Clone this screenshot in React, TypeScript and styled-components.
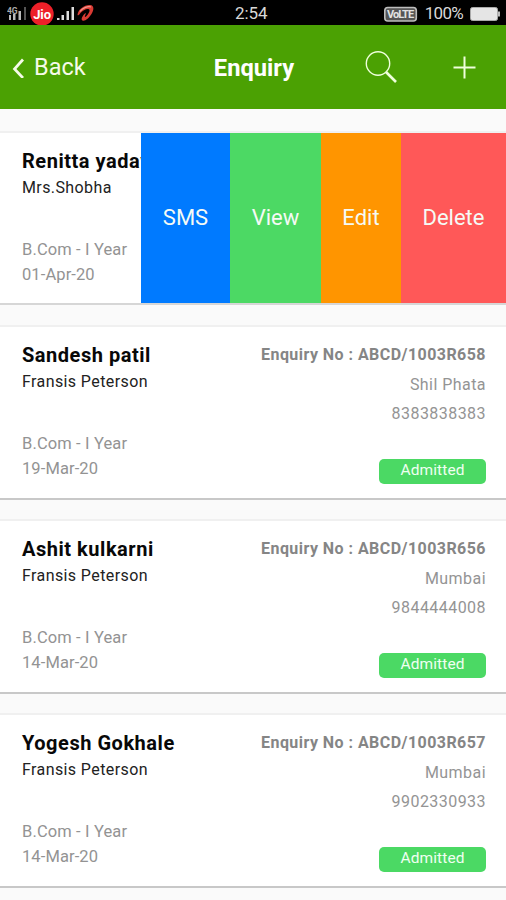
import React from "react";
import styled, { createGlobalStyle } from "styled-components";

const GlobalStyle = createGlobalStyle`
  * { box-sizing: border-box; }
  html, body { margin: 0; padding: 0; background: #fafafa; }
  body { font-family: Roboto, "Liberation Sans", sans-serif; overflow: hidden; }
`;

const Screen = styled.div`
  display: flex;
  flex-direction: column;
  width: 506px;
  height: 900px;
  overflow: hidden;
  background: #fafafa;
`;

const StatusBar = styled.div`
  display: grid;
  grid-template-columns: 228px 33px 1fr;
  align-items: center;
  height: 25px;
  flex: none;
  padding: 0 6px 0 7px;
  background: #000;
  color: #d8d8d8;
  font-size: 17px;
  line-height: 25px;
  letter-spacing: -0.1px;
`;

const StatusSide = styled.div<{ $end?: boolean }>`
  display: flex;
  align-items: center;
  justify-content: ${(p) => (p.$end ? "flex-end" : "flex-start")};
  gap: 7px;
  height: 25px;
`;

const Clock = styled.span`
  padding-top: 1px;
`;

const Percent = styled.span`
  padding-top: 1px;
  letter-spacing: -0.7px;
`;

const Header = styled.header`
  display: grid;
  grid-template-columns: 180px 148px 1fr;
  align-items: center;
  flex: none;
  height: 84px;
  background: #4ba103;
  color: #fff;
`;

const BackButton = styled.button`
  display: flex;
  align-items: center;
  gap: 9px;
  padding: 0 0 0 12px;
  border: 0;
  background: none;
  color: #f6fbe9;
  font: 400 23.5px/30px Roboto, sans-serif;
`;

const Title = styled.h1`
  margin: 0;
  padding-top: 2px;
  text-align: center;
  font-size: 23.7px;
  font-weight: 700;
  line-height: 30px;
`;

const HeaderTools = styled.div`
  display: flex;
  justify-content: space-between;
  align-items: center;
  padding: 0 30px 0 36px;
`;

const IconButton = styled.button`
  display: flex;
  padding: 0;
  border: 0;
  background: none;
`;

const List = styled.main`
  display: flex;
  flex-direction: column;
  gap: 19px;
  padding-top: 22px;
`;

const Card = styled.article<{ $swiped?: boolean }>`
  display: flex;
  flex: none;
  height: ${(p) => (p.$swiped ? "174px" : "175px")};
  margin-bottom: ${(p) => (p.$swiped ? "1px" : "0")};
  border-top: 2px solid #f0f0f0;
  border-bottom: 2px solid ${(p) => (p.$swiped ? "#d6d6d6" : "#c8c8c8")};
  background: #fff;
`;

const Person = styled.div<{ $swiped?: boolean }>`
  display: flex;
  flex-direction: column;
  width: ${(p) => (p.$swiped ? "141px" : "230px")};
  flex: none;
  overflow: hidden;
  white-space: nowrap;
  padding: 16px 0 0 22px;
`;

const Name = styled.h2`
  margin: 0;
  color: #080808;
  font-size: 20px;
  font-weight: 700;
  line-height: 24px;
  letter-spacing: 0.53px;
`;

const Guardian = styled.span`
  margin-top: 3px;
  color: #222;
  font-size: 16px;
  line-height: 24px;
  letter-spacing: 0.4px;
`;

const Course = styled.span`
  margin-top: 37px;
  color: #939393;
  font-size: 16.5px;
  line-height: 26px;
  letter-spacing: 0.13px;
`;

const EnquiryDate = styled.span`
  color: #939393;
  font-size: 16.5px;
  line-height: 24px;
  letter-spacing: 0.1px;
`;

const Details = styled.div`
  display: flex;
  flex-direction: column;
  align-items: flex-end;
  flex: 1;
  padding: 15px 20px 0 0;
  color: #949494;
  font-size: 16px;
  line-height: 29px;
  letter-spacing: 0.45px;
`;

const EnquiryNumber = styled.strong`
  color: #858585;
  font-weight: 700;
  line-height: 26px;
  margin-bottom: 2px;
`;

const Badge = styled.span`
  width: 107px;
  height: 25px;
  margin-top: 31px;
  border-radius: 5px;
  background: #4bd964;
  color: #effff0;
  text-align: center;
  font-size: 15.5px;
  line-height: 23px;
  letter-spacing: 0.1px;
`;

const Actions = styled.div`
  display: grid;
  grid-template-columns: 89px 91px 80px 1fr;
  flex: 1;
`;

const Action = styled.button<{ $color: string }>`
  padding: 0;
  border: 0;
  background: ${(p) => p.$color};
  color: #f5faf5;
  font: 400 22px/26px Roboto, sans-serif;
`;

const records = [
  { name: "Sandesh patil", date: "19-Mar-20", no: "ABCD/1003R658", city: "Shil Phata", phone: "8383838383" },
  { name: "Ashit kulkarni", date: "14-Mar-20", no: "ABCD/1003R656", city: "Mumbai", phone: "9844444008" },
  { name: "Yogesh Gokhale", date: "14-Mar-20", no: "ABCD/1003R657", city: "Mumbai", phone: "9902330933" },
];

const actions = [
  { label: "SMS", color: "#007aff" },
  { label: "View", color: "#4cd964" },
  { label: "Edit", color: "#ff9500" },
  { label: "Delete", color: "#ff5858" },
];

const CarrierIcons = () => (
  <svg width="90" height="25" viewBox="7 0 90 25">
    <g fill="#bbb">
      <rect x="9" y="14" width="2" height="5" />
      <rect x="13" y="13" width="2.5" height="6" />
      <rect x="18.5" y="10" width="2.5" height="9" />
      <rect x="24" y="6" width="2" height="13" fill="#555" />
    </g>
    <text x="7" y="13" fontSize="8.5" fontWeight="700" fill="#aaa">4G</text>
    <circle cx="42" cy="13" r="11.7" fill="#ed2029" />
    <text x="42" y="17.7" textAnchor="middle" fontSize="13" fontWeight="700" fill="#fff">Jio</text>
    <g fill="#ddd">
      <rect x="57" y="17" width="2.5" height="2" />
      <rect x="61.5" y="14" width="2.5" height="5" />
      <rect x="66.5" y="10" width="2.5" height="9" />
      <rect x="71.5" y="6" width="2.5" height="13" />
    </g>
    <path
      d="M77.5 14C78 8 85 3.5 90 4C94.500 4.500 94 9 91.500 13C89 17 85 20.500 82.500 19.500C80.500 18.500 82.500 14.500 85.500 12C86.500 12.500 84.500 15 85 16C86.500 16 90 11 89.500 9C88.500 6.500 83 9 80.500 12C79.500 13.500 78.500 15 77.500 14Z"
      fill="#d93a33"
    />
    <path d="M80 10.5C83 6.500 88 5 91 6" fill="none" stroke="#f39a90" strokeWidth="1.2" />
  </svg>
);

const VolteIcon = () => (
  <svg width="34" height="25" viewBox="0 0 34 25">
    <rect x=".8" y="6.5" width="31.500" height="13.5" rx="3" fill="#555" stroke="#bdbdbd" strokeWidth="1.6" />
    <text x="16.500" y="17.3" textAnchor="middle" textLength="27" fontSize="11" fontWeight="700" fill="#e2e2e2">VoLTE</text>
  </svg>
);

const BatteryIcon = () => (
  <svg width="30" height="25" viewBox="0 0 30 25">
    <rect x=".5" y="6.5" width="27" height="13" rx="2" fill="#e5e5e5" stroke="#aaa" />
    <rect x="28" y="10.5" width="2" height="5" fill="#bbb" />
  </svg>
);

export default function App() {
  return (
    <>
      <GlobalStyle />
      <Screen>
        <StatusBar>
          <StatusSide><CarrierIcons /></StatusSide>
          <Clock>2:54</Clock>
          <StatusSide $end>
            <VolteIcon />
            <Percent>100%</Percent>
            <BatteryIcon />
          </StatusSide>
        </StatusBar>
        <Header>
          <BackButton>
            <svg width="13" height="22" viewBox="0 0 13 22" fill="none" stroke="#f6fbe9" strokeWidth="2.7">
              <path d="M11 3.5L2.5 13L11 22" />
            </svg>
            Back
          </BackButton>
          <Title>Enquiry</Title>
          <HeaderTools>
            <IconButton aria-label="Search">
              <svg width="34" height="34" viewBox="0 0 34 34" fill="none" stroke="#efffdc">
                <circle cx="14" cy="13.5" r="11.7" strokeWidth="1.4" />
                <path d="M22 22L32 32" strokeWidth="2.7" />
              </svg>
            </IconButton>
            <IconButton aria-label="Add">
              <svg width="23" height="23" viewBox="0 0 23 23" stroke="#efffdc" strokeWidth="2">
                <path d="M0.5 11.5H22.5M11.5 0.5V22.5" />
              </svg>
            </IconButton>
          </HeaderTools>
        </Header>
        <List>
          <Card $swiped>
            <Person $swiped>
              <Name>Renitta yadav</Name>
              <Guardian>Mrs.Shobha</Guardian>
              <Course>B.Com - I Year</Course>
              <EnquiryDate>01-Apr-20</EnquiryDate>
            </Person>
            <Actions>
              {actions.map((a) => (
                <Action key={a.label} $color={a.color}>{a.label}</Action>
              ))}
            </Actions>
          </Card>
          {records.map((r) => (
            <Card key={r.no}>
              <Person>
                <Name>{r.name}</Name>
                <Guardian>Fransis Peterson</Guardian>
                <Course>B.Com - I Year</Course>
                <EnquiryDate>{r.date}</EnquiryDate>
              </Person>
              <Details>
                <EnquiryNumber>Enquiry No : {r.no}</EnquiryNumber>
                <span>{r.city}</span>
                <span>{r.phone}</span>
                <Badge>Admitted</Badge>
              </Details>
            </Card>
          ))}
        </List>
      </Screen>
    </>
  );
}
